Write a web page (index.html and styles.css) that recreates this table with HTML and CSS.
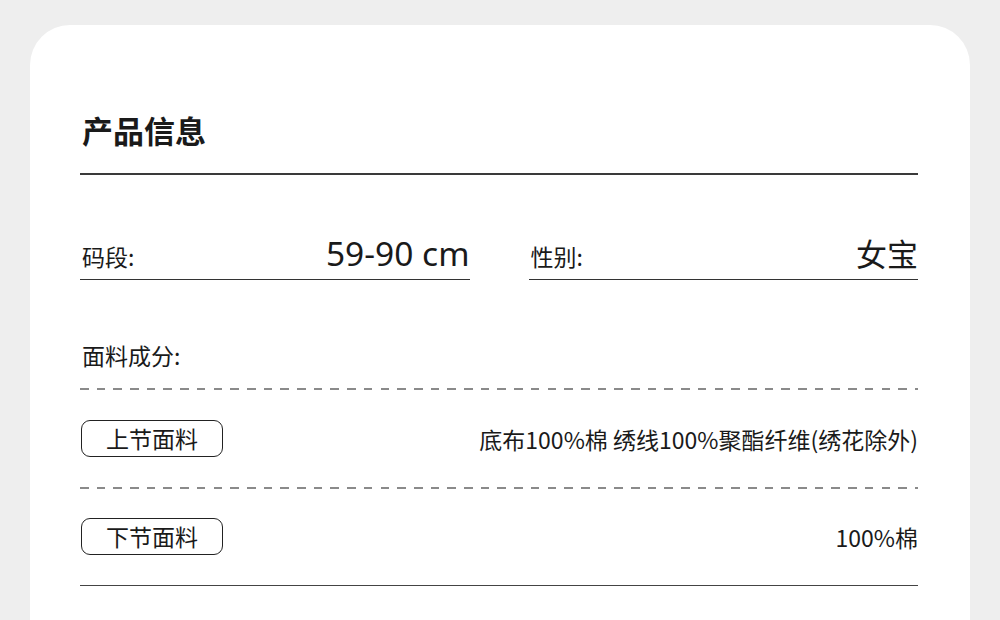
FILE: index.html
```html
<!DOCTYPE html>
<html lang="zh-CN">
<head>
<meta charset="utf-8">
<title>产品信息</title>
<link rel="stylesheet" href="styles.css">
</head>
<body>
<main class="card">
  <h1 class="title">产品信息</h1>
  <div class="fields">
    <div class="field">
      <span class="label">码段:</span>
      <span class="value value-latin">59-90 cm</span>
    </div>
    <div class="field">
      <span class="label">性别:</span>
      <span class="value">女宝</span>
    </div>
  </div>
  <div class="section-label">面料成分:</div>
  <div class="fabric-row">
    <span class="pill">上节面料</span>
    <span class="fabric-text">底布100%棉 绣线100%聚酯纤维(绣花除外)</span>
  </div>
  <div class="fabric-row last">
    <span class="pill">下节面料</span>
    <span class="fabric-text">100%棉</span>
  </div>
</main>
</body>
</html>
```

FILE: styles.css
```css
html, body {
  margin: 0;
  padding: 0;
}
body {
  background: #eeeeee;
  padding: 25px 30px 0 30px;
  height: 620px;
  box-sizing: border-box;
  overflow: hidden;
  font-family: "Noto Sans CJK SC", "Noto Sans", sans-serif;
  color: #1a1a1a;
}
.card {
  background: #ffffff;
  border-radius: 40px 40px 0 0;
  padding: 0 52px 40px 50px;
  min-height: 600px;
}
.title {
  margin: 0;
  padding-top: 85px;
  padding-bottom: 23px;
  font-size: 31px;
  line-height: 40px;
  font-weight: 700;
  padding-left: 2px;
  border-bottom: 2px solid #3a3a3a;
}
.fields {
  display: flex;
  gap: 59px;
  margin-top: 58px;
}
.field {
  flex: 1;
  display: flex;
  justify-content: space-between;
  align-items: baseline;
  border-bottom: 1.5px solid #333;
  padding-bottom: 6px;
}
.label {
  font-size: 23px;
  line-height: 30px;
  padding-left: 2px;
}
.value {
  font-size: 31px;
  line-height: 40px;
}
.value-latin {
  font-family: "Noto Sans", "Noto Sans CJK SC", sans-serif;
  font-size: 33.5px;
}
.section-label {
  margin-top: 60px;
  font-size: 23px;
  line-height: 30px;
  padding-left: 2px;
  padding-bottom: 18px;
}
.fabric-row {
  display: flex;
  justify-content: space-between;
  align-items: center;
  padding: 32px 0 30px 0;
  background-image: repeating-linear-gradient(to right, #8a8a8a 0, #8a8a8a 8.5px, transparent 8.5px, transparent 16.7px);
  background-size: 100% 2px;
  background-repeat: no-repeat;
  background-position: 0 0;
}
.fabric-row.last {
  padding-top: 31px;
  padding-bottom: 30px;
  border-bottom: 1.5px solid #444;
}
.pill {
  display: inline-block;
  width: 140px;
  height: 35px;
  line-height: 35px;
  text-align: center;
  border: 1px solid #222;
  border-radius: 9px;
  font-size: 23px;
  margin-left: 1px;
}
.fabric-text {
  font-size: 23px;
  line-height: 30px;
}
```
